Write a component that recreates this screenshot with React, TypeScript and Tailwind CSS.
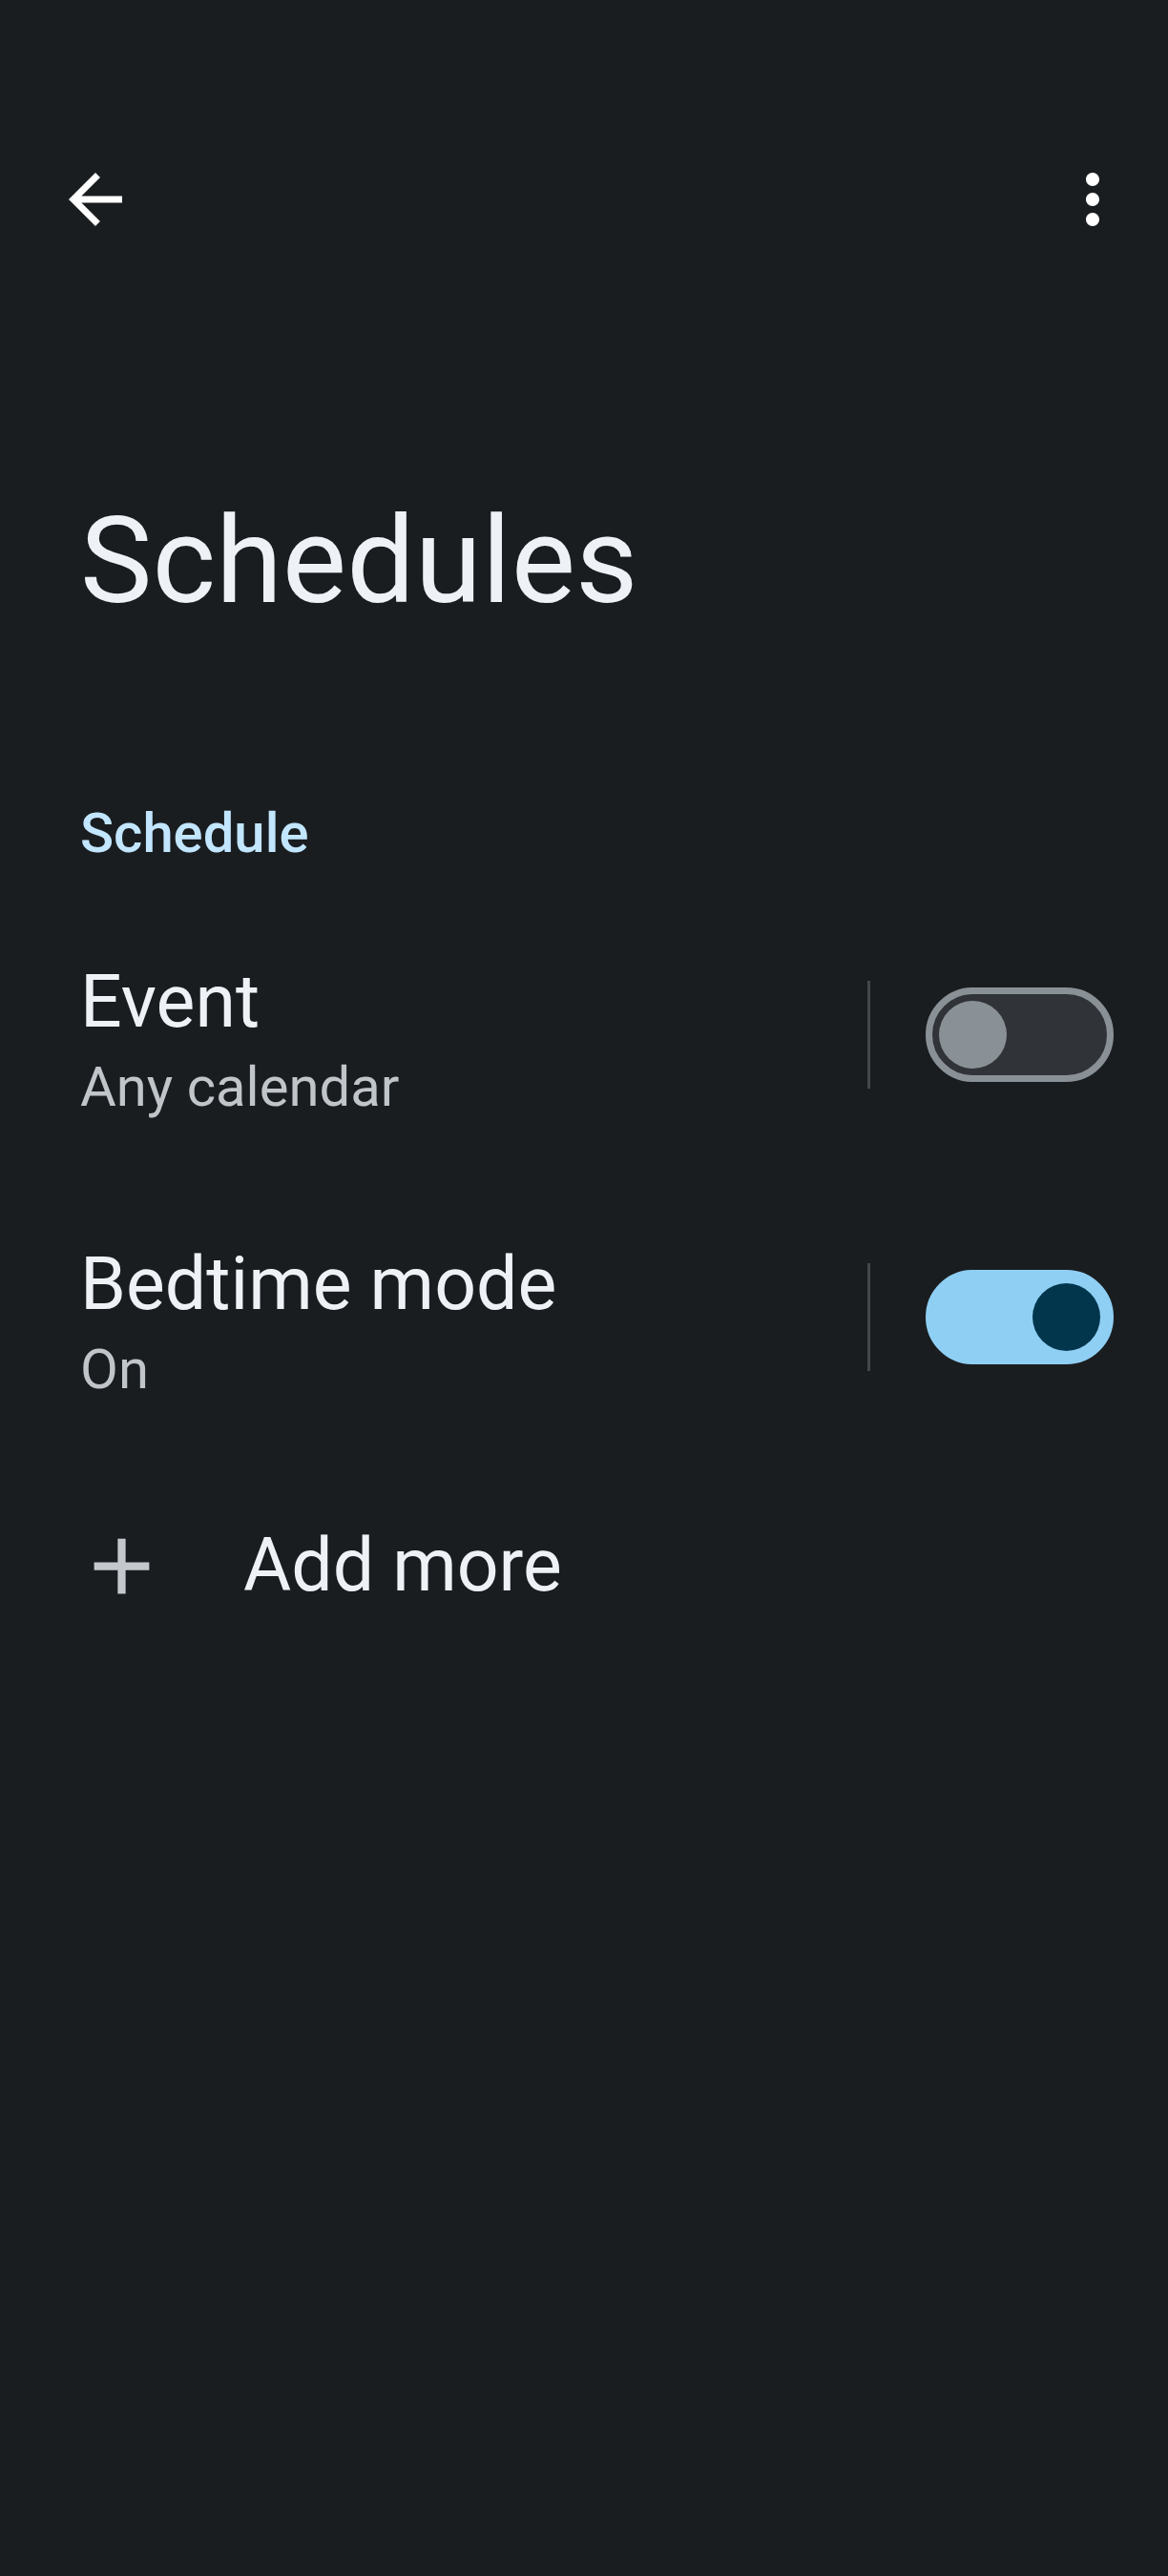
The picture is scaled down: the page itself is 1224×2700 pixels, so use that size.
import React from "react";

function BackIcon() {
  return (
    <svg viewBox="0 0 24 24" className="w-[84px] h-[84px]" fill="#ffffff">
      <path d="M20 11H7.83l5.59-5.59L12 4l-8 8 8 8 1.41-1.41L7.83 13H20v-2z" />
    </svg>
  );
}

function MoreIcon() {
  return (
    <svg viewBox="0 0 24 24" className="w-[84px] h-[84px]" fill="#ffffff">
      <path d="M12 8c1.1 0 2-.9 2-2s-.9-2-2-2-2 .9-2 2 .9 2 2 2zm0 2c-1.1 0-2 .9-2 2s.9 2 2 2 2-.9 2-2-.9-2-2-2zm0 6c-1.1 0-2 .9-2 2s.9 2 2 2 2-.9 2-2-.9-2-2-2z" />
    </svg>
  );
}

function AddIcon() {
  return (
    <svg viewBox="0 0 24 24" className="w-[99px] h-[99px] shrink-0" fill="#c4c8cc">
      <path d="M19 13h-6v6h-2v-6H5v-2h6V5h2v6h6v2z" />
    </svg>
  );
}

function Switch({ on }: { on: boolean }) {
  return on ? (
    <div className="w-[197px] h-[99px] rounded-full border-[7px] border-[#8fcff4] bg-[#8fcff4] flex items-center justify-end px-[7px]">
      <div className="w-[71px] h-[71px] rounded-full bg-[#02364d]" />
    </div>
  ) : (
    <div className="w-[197px] h-[99px] rounded-full border-[7px] border-[#8a9196] bg-[#303338] flex items-center justify-start px-[7px]">
      <div className="w-[71px] h-[71px] rounded-full bg-[#8a9196]" />
    </div>
  );
}

function Row({ title, summary, on }: { title: string; summary: string; on: boolean }) {
  return (
    <div className="flex items-center pl-[84px] pr-[57px] py-[64px]">
      <div className="flex-1 flex flex-col">
        <div className="text-[77px] leading-[90px] text-[#eef2f6]">{title}</div>
        <div className="mt-[10px] text-[58px] leading-[68px] text-[#c0c5ca]">{summary}</div>
      </div>
      <div className="flex items-center mb-[10px]">
        <div className="w-[3.5px] h-[113px] bg-[#43474a]" />
        <div className="ml-[58px]">
          <Switch on={on} />
        </div>
      </div>
    </div>
  );
}

export default function App() {
  return (
    <div className="min-h-screen w-full bg-[#1a1d20] font-['Roboto','Liberation_Sans',sans-serif]">
      <div className="pt-[125px] h-[293px] flex items-center justify-between pl-[58px] pr-[37px]">
        <BackIcon />
        <MoreIcon />
      </div>
      <h1 className="mt-[221px] pl-[84px] text-[127px] leading-[148px] font-normal text-[#eef2f6]">
        Schedules
      </h1>
      <div className="mt-[177px] pl-[84px] text-[58px] leading-[68px] font-medium text-[#c2e6ff]">
        Schedule
      </div>
      <div className="mt-[34px]">
        <Row title="Event" summary="Any calendar" on={false} />
        <Row title="Bedtime mode" summary="On" on={true} />
        <div className="h-[216px] flex items-center pl-[78px]">
          <AddIcon />
          <div className="ml-[78px] text-[77px] leading-[90px] text-[#eef2f6]">Add more</div>
        </div>
      </div>
    </div>
  );
}
